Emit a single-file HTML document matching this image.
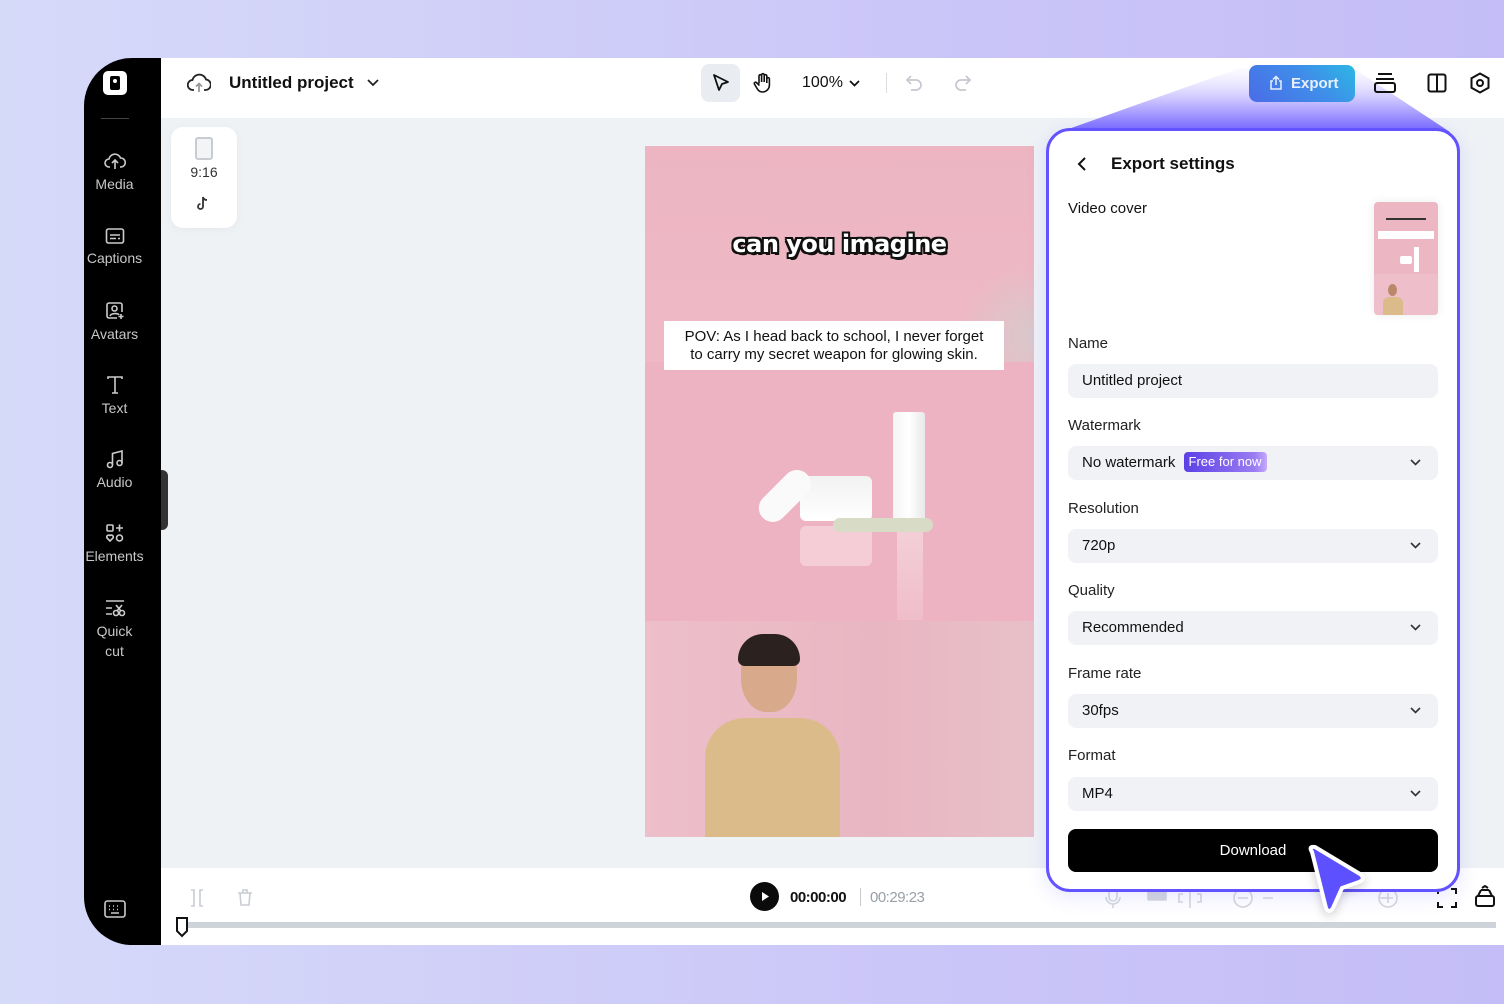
<!DOCTYPE html>
<html><head><meta charset="utf-8"><style>
*{box-sizing:border-box;margin:0;padding:0}
body{width:1504px;height:1004px;overflow:hidden;font-family:"Liberation Sans",sans-serif;background:linear-gradient(90deg,#d6daf9,#cbc6f8 60%,#c4bdf7);position:relative}
.abs{position:absolute}
.app{left:84px;top:58px;width:1420px;height:887px;border-radius:48px 0 0 48px;overflow:hidden;background:#eff2f5}
.side{left:0;top:0;width:77px;height:887px;background:#000}
.top{left:77px;top:0;right:0;height:60px;background:#fff}
.bot{left:77px;top:810px;right:0;height:77px;background:#fff}
.si{position:absolute;left:76px;width:77px;text-align:center;color:#c8c8c8;font-size:14px;line-height:20px}
.si svg{display:block;margin:0 auto 3px}
.lbl{position:absolute;left:1068px;font-size:15px;color:#222}
.fld{position:absolute;left:1068px;width:370px;height:34px;background:#f0f2f5;border-radius:8px;font-size:15px;color:#111;padding-left:14px;line-height:34px}
.fld .ch{position:absolute;right:16px;top:12px}
</style></head><body>
<div class="abs app">
 <div class="abs side">
  <div class="abs" style="left:19px;top:13px;width:24px;height:24px;background:#fff;border-radius:5px"><div style="position:absolute;left:7px;top:5px;width:10px;height:14px;background:#000;border-radius:2px"></div><div style="position:absolute;left:10px;top:8px;width:4px;height:4px;background:#fff;border-radius:2px"></div></div>
  <div class="abs" style="left:17px;top:60px;width:28px;height:1px;background:#444"></div>
  <div class="abs" style="left:77px;top:412px;width:7px;height:60px;background:#333;border-radius:0 6px 6px 0"></div>
 </div>
 <div class="abs top"></div>
 <div class="abs bot"></div>
</div>
<div class="si" style="top:151px"><svg width="22" height="20" viewBox="0 0 22 20" fill="none" stroke="#ccc" stroke-width="1.6"><path d="M6 16H5a4 4 0 0 1 0-8 6 6 0 0 1 11.5-1A4.5 4.5 0 0 1 17 16h-1"/><path d="M11 18v-8M8 12l3-3 3 3"/></svg>Media</div>
<div class="si" style="top:227px"><svg width="20" height="18" viewBox="0 0 20 18" fill="none" stroke="#ccc" stroke-width="1.6"><rect x="1.5" y="2" width="17" height="14" rx="2"/><path d="M5 8h10M5 11.5h6M13 11.5h2"/></svg>Captions</div>
<div class="si" style="top:301px"><svg width="20" height="20" viewBox="0 0 20 20" fill="none" stroke="#ccc" stroke-width="1.6"><path d="M12 17H4a2 2 0 0 1-2-2V4a2 2 0 0 1 2-2h11a2 2 0 0 1 2 2v7"/><circle cx="9.5" cy="7.5" r="2.5"/><path d="M5 15c1-3 8-3 9-1"/><path d="M16 13v5M13.5 15.5h5"/></svg>Avatars</div>
<div class="si" style="top:375px"><svg width="20" height="20" viewBox="0 0 20 20" fill="none" stroke="#ccc" stroke-width="1.6"><path d="M3 4V2h14v2M10 2v16M7 18h6"/></svg>Text</div>
<div class="si" style="top:449px"><svg width="20" height="20" viewBox="0 0 20 20" fill="none" stroke="#ccc" stroke-width="1.6"><circle cx="5" cy="16" r="2.5"/><circle cx="14.5" cy="14" r="2.5"/><path d="M7.5 16V4.5L17 2v12"/></svg>Audio</div>
<div class="si" style="top:523px"><svg width="20" height="20" viewBox="0 0 20 20" fill="none" stroke="#ccc" stroke-width="1.6"><rect x="2" y="2" width="6" height="6" rx="1"/><path d="M14.5 1.5v7M11 5h7"/><path d="M5 18l-3-3a2 2 0 0 1 3-2.5 2 2 0 0 1 3 2.5z"/><circle cx="14.5" cy="15" r="3"/></svg>Elements</div>
<div class="si" style="top:598px"><svg width="22" height="20" viewBox="0 0 22 20" fill="none" stroke="#ccc" stroke-width="1.6"><path d="M2 3h18M2 10h6M2 16h6"/><circle cx="12" cy="15" r="2.5"/><circle cx="18" cy="15" r="2.5"/><path d="M13 13l5-6M17 13l-5-6"/></svg>Quick<br>cut</div>
<svg class="abs" style="left:104px;top:900px" width="22" height="18" viewBox="0 0 22 18" fill="none" stroke="#ccc" stroke-width="1.6"><rect x="1" y="1" width="20" height="16" rx="2.5"/><path d="M5 6h1M9 6h1M13 6h1M17 6h0M5 9.5h1M9 9.5h1M13 9.5h1M7 13h8"/></svg>

<svg class="abs" style="left:187px;top:72px" width="24" height="22" viewBox="0 0 24 22" fill="none" stroke="#222" stroke-width="1.8"><path d="M7 18H6a5 5 0 0 1-.5-10A7 7 0 0 1 19 7.5 5 5 0 0 1 18 18h-1"/><path d="M12 20v-8M9 14.5l3-3 3 3" stroke="#999"/></svg>
<div class="abs" style="left:229px;top:73px;font-size:17px;font-weight:bold;color:#111">Untitled project</div>
<svg class="abs" style="left:366px;top:78px" width="14" height="10" viewBox="0 0 14 10" fill="none" stroke="#222" stroke-width="1.8"><path d="M2 2l5 5 5-5"/></svg>
<div class="abs" style="left:701px;top:64px;width:39px;height:38px;background:#e9ecf0;border-radius:8px"></div>
<svg class="abs" style="left:711px;top:73px" width="20" height="20" viewBox="0 0 20 20" fill="none" stroke="#111" stroke-width="1.8" stroke-linejoin="round"><path d="M3 2l14 7-6 2-3 6z"/></svg>
<svg class="abs" style="left:752px;top:72px" width="22" height="22" viewBox="0 0 22 22" fill="none" stroke="#111" stroke-width="1.6" stroke-linecap="round"><path d="M7 11V4a1.3 1.3 0 0 1 2.6 0v6V3a1.3 1.3 0 0 1 2.6 0v7V4a1.3 1.3 0 0 1 2.6 0v7V7a1.3 1.3 0 0 1 2.6 0v6a7 7 0 0 1-7 7 6 6 0 0 1-5-3l-3-5a1.3 1.3 0 0 1 2-1.5L7 13"/></svg>
<div class="abs" style="left:802px;top:74px;font-size:16px;color:#111">100%</div>
<svg class="abs" style="left:848px;top:79px" width="13" height="9" viewBox="0 0 13 9" fill="none" stroke="#111" stroke-width="1.8"><path d="M2 2l4.5 4.5L11 2"/></svg>
<div class="abs" style="left:886px;top:73px;width:1px;height:20px;background:#ddd"></div>
<svg class="abs" style="left:905px;top:74px" width="20" height="18" viewBox="0 0 20 18" fill="none" stroke="#c5c9cf" stroke-width="1.7"><path d="M6 2L2 6l4 4M2 6h9a5 5 0 0 1 0 10H6"/></svg>
<svg class="abs" style="left:952px;top:74px" width="20" height="18" viewBox="0 0 20 18" fill="none" stroke="#c5c9cf" stroke-width="1.7"><path d="M14 2l4 4-4 4M18 6H9a5 5 0 0 0 0 10h5"/></svg>

<svg class="abs" style="left:1046px;top:60px" width="420" height="80" viewBox="0 0 420 80"><defs><linearGradient id="bm" x1="0" y1="0" x2="0" y2="1"><stop offset="0" stop-color="#f4f2ff" stop-opacity=".3"/><stop offset=".6" stop-color="#b9b0ff"/><stop offset="1" stop-color="#7466ff"/></linearGradient></defs><path d="M194 8L307 8L404 72L14 72Z" fill="url(#bm)"/></svg>
<div class="abs" style="left:1249px;top:65px;width:106px;height:37px;border-radius:8px;background:linear-gradient(45deg,#4a6ce8,#3f8fe9 60%,#2cb8e4);color:#e8f0ff;font-size:15px;font-weight:bold;line-height:37px;padding-left:42px">Export</div>
<svg class="abs" style="left:1268px;top:75px" width="16" height="16" viewBox="0 0 16 16" fill="none" stroke="#e8f0ff" stroke-width="1.5"><path d="M5 6H3v8h10V6h-2M8 10V1.5M5 4.5l3-3 3 3"/></svg>
<svg class="abs" style="left:1373px;top:72px" width="24" height="22" viewBox="0 0 24 22" fill="none" stroke="#111" stroke-width="2"><path d="M5 2h14M3 7h18"/><rect x="2" y="11" width="20" height="9" rx="2"/></svg>
<svg class="abs" style="left:1427px;top:73px" width="20" height="20" viewBox="0 0 20 20" fill="none" stroke="#111" stroke-width="2"><rect x="1.5" y="1.5" width="17" height="17" rx="2"/><path d="M10 2v16"/></svg>
<svg class="abs" style="left:1469px;top:72px" width="22" height="22" viewBox="0 0 22 22" fill="none" stroke="#111" stroke-width="2"><path d="M11 1.5l8.5 4.75v9.5L11 20.5l-8.5-4.75v-9.5z"/><circle cx="11" cy="11" r="3"/></svg>

<div class="abs" style="left:171px;top:127px;width:66px;height:101px;background:#fff;border-radius:12px;box-shadow:0 2px 10px rgba(0,0,0,.04)"></div>
<div class="abs" style="left:195px;top:137px;width:18px;height:23px;border:2px solid #c7ccd3;border-radius:3px;background:#f2f4f6"></div>
<div class="abs" style="left:171px;top:164px;width:66px;text-align:center;font-size:14px;color:#333">9:16</div>
<svg class="abs" style="left:196px;top:196px" width="14" height="16" viewBox="0 0 14 16"><path d="M7 1v9.5a2.5 2.5 0 1 1-2.5-2.5M7 1c.5 2 2 3 4 3" fill="none" stroke="#333" stroke-width="1.8"/></svg>

<div class="abs" style="left:645px;top:146px;width:389px;height:691px;overflow:hidden;background:#ecb7c3">
 <div class="abs" style="left:0;top:0;width:389px;height:216px;background:linear-gradient(180deg,#ecb5c1,#eeb9c5)"></div>
 <div class="abs" style="left:300px;top:120px;width:120px;height:140px;background:radial-gradient(circle at 70% 50%,#d9c8cc,transparent 65%)"></div>
 <div class="abs" style="left:0;top:216px;width:389px;height:259px;background:#eeb3c2"></div>
 <div class="abs" style="left:0;top:475px;width:389px;height:216px;background:linear-gradient(90deg,#edbfca,#e8b6c2 60%,#e8c0c8)"></div>
 <div class="abs" style="left:248px;top:266px;width:32px;height:120px;background:linear-gradient(90deg,#f4f4f4,#fff,#e8e8e8);border-radius:3px"></div>
 <div class="abs" style="left:252px;top:384px;width:26px;height:90px;background:linear-gradient(180deg,#f5d6dd,#f0c0cc);opacity:.8"></div>
 <div class="abs" style="left:155px;top:330px;width:72px;height:45px;background:linear-gradient(180deg,#f2f2f2,#fff);border-radius:6px"></div>
 <div class="abs" style="left:155px;top:380px;width:72px;height:40px;background:#f5d3db;border-radius:6px;opacity:.8"></div>
 <div class="abs" style="left:108px;width:62px;height:28px;background:#fafafa;border-radius:14px;transform:rotate(-45deg);transform-origin:left top;top:362px"></div>
 <div class="abs" style="left:188px;top:372px;width:100px;height:14px;background:#d8dcc6;border-radius:8px"></div>
 <div class="abs" style="left:96px;top:492px;width:56px;height:74px;background:#d8a98a;border-radius:45%"></div>
 <div class="abs" style="left:93px;top:488px;width:62px;height:32px;background:#2b2220;border-radius:30px 30px 8px 8px"></div>
 <div class="abs" style="left:60px;top:572px;width:135px;height:125px;background:#dcbb8a;border-radius:40px 40px 0 0"></div>
 <div style="position:absolute;left:0;top:84px;width:389px;text-align:center;font-family:'DejaVu Sans',sans-serif;font-weight:bold;font-size:24px;color:#fff;letter-spacing:-0.5px;text-shadow:2px 0 #111,-2px 0 #111,0 2px #111,0 -2px #111,2px 2px #111,-2px 2px #111,2px -2px #111,-2px -2px #111,2px 3px #111">can you imagine</div>
 <div class="abs" style="left:19px;top:175px;width:340px;height:49px;background:#fff;text-align:center;font-size:15px;color:#111;line-height:18px;padding-top:7px">POV: As I head back to school, I never forget<br>to carry my secret weapon for glowing skin.</div>
</div>

<svg class="abs" style="left:189px;top:888px" width="16" height="20" viewBox="0 0 16 20" fill="none" stroke="#c8cdd3" stroke-width="1.6"><path d="M2 2h3v16H2M14 2h-3v16h3"/></svg>
<svg class="abs" style="left:236px;top:887px" width="18" height="20" viewBox="0 0 18 20" fill="none" stroke="#c8cdd3" stroke-width="1.6"><path d="M2 6h14M4 6l1 12h8l1-12M7 6V3h4v3"/></svg>
<div class="abs" style="left:750px;top:882px;width:29px;height:29px;border-radius:50%;background:#0b0b0b"></div>
<svg class="abs" style="left:760px;top:891px" width="10" height="11" viewBox="0 0 10 11"><path d="M2 1l7 4.5L2 10z" fill="#fff"/></svg>
<div class="abs" style="left:790px;top:889px;font-size:15px;font-weight:bold;color:#111;letter-spacing:-0.5px">00:00:00</div>
<div class="abs" style="left:860px;top:888px;width:1px;height:18px;background:#ccc"></div>
<div class="abs" style="left:870px;top:889px;font-size:15px;color:#9aa0a8;letter-spacing:-0.5px">00:29:23</div>
<div class="abs" style="left:176px;top:922px;width:1320px;height:6px;background:#cfd4db"></div>
<svg class="abs" style="left:174px;top:915px" width="16" height="24" viewBox="0 0 16 24"><path d="M3 3h10v13l-5 5-5-5z" fill="#fff" stroke="#111" stroke-width="2"/></svg>
<svg class="abs" style="left:1103px;top:886px" width="300" height="24" viewBox="0 0 300 24" fill="none" stroke="#d4d8dd" stroke-width="1.6"><rect x="6" y="3" width="8" height="12" rx="4"/><path d="M3 11a7 7 0 0 0 14 0M10 18v4"/><rect x="45" y="4" width="18" height="10" rx="1" fill="#d4d8dd"/><path d="M87 4v18M80 8h-4v8h4M94 8h4v8h-4"/><circle cx="140" cy="12" r="9"/><path d="M135 12h10M160 12h10M276 12h10"/><circle cx="285" cy="12" r="9"/><path d="M285 7v10M280 12h10"/></svg>
<svg class="abs" style="left:1436px;top:887px" width="22" height="22" viewBox="0 0 22 22" fill="none" stroke="#111" stroke-width="2"><path d="M2 7V2h5M15 2h5v5M20 15v5h-5M7 20H2v-5"/></svg>
<svg class="abs" style="left:1474px;top:885px" width="22" height="24" viewBox="0 0 22 24" fill="none" stroke="#111" stroke-width="2"><rect x="2" y="11" width="18" height="10" rx="2"/><path d="M4 11l3-6M18 11l-3-6M7 5h8M8 3l3-2 3 2"/></svg>

<div class="abs" style="left:1046px;top:128px;width:414px;height:764px;border:3px solid #6353ff;border-radius:24px;background:#fff;box-shadow:0 4px 20px rgba(90,80,255,.15)"></div>
<svg class="abs" style="left:1076px;top:156px" width="12" height="16" viewBox="0 0 12 16" fill="none" stroke="#111" stroke-width="2"><path d="M9 2L3 8l6 6"/></svg>
<div class="abs" style="left:1111px;top:154px;font-size:17px;font-weight:bold;color:#111">Export settings</div>
<div class="abs" style="left:1068px;top:200px;font-size:15px;color:#111">Video cover</div>
<div class="abs" style="left:1374px;top:202px;width:64px;height:113px;border-radius:4px;overflow:hidden;background:#ecb7c3;box-shadow:0 0 10px rgba(0,0,0,.08)">
 <div class="abs" style="left:0;top:72px;width:64px;height:41px;background:#eebfca"></div>
 <div class="abs" style="left:12px;top:16px;width:40px;height:2px;background:#333"></div>
 <div class="abs" style="left:4px;top:29px;width:56px;height:8px;background:#fff"></div>
 <div class="abs" style="left:40px;top:45px;width:5px;height:25px;background:#fff"></div>
 <div class="abs" style="left:26px;top:54px;width:12px;height:8px;background:#fff;border-radius:2px"></div>
 <div class="abs" style="left:14px;top:82px;width:9px;height:12px;background:#b98868;border-radius:50%"></div>
 <div class="abs" style="left:9px;top:95px;width:20px;height:18px;background:#dcbb8a;border-radius:6px 6px 0 0"></div>
</div>
<div class="lbl" style="top:335px">Name</div>
<div class="fld" style="top:364px">Untitled project</div>
<div class="lbl" style="top:417px">Watermark</div>
<div class="fld" style="top:446px">No watermark <span style="display:inline-block;margin-left:4px;background:linear-gradient(90deg,#5b40e6,#9a7cf2 85%,#c7a9fb);color:#fff;font-size:13px;line-height:20px;padding:0 5px;border-radius:4px;vertical-align:1px">Free for now</span><svg class="ch" width="13" height="9" viewBox="0 0 13 9" fill="none" stroke="#333" stroke-width="1.6"><path d="M2 2l4.5 4.5L11 2"/></svg></div>
<div class="lbl" style="top:500px">Resolution</div>
<div class="fld" style="top:529px">720p<svg class="ch" width="13" height="9" viewBox="0 0 13 9" fill="none" stroke="#333" stroke-width="1.6"><path d="M2 2l4.5 4.5L11 2"/></svg></div>
<div class="lbl" style="top:582px">Quality</div>
<div class="fld" style="top:611px">Recommended<svg class="ch" width="13" height="9" viewBox="0 0 13 9" fill="none" stroke="#333" stroke-width="1.6"><path d="M2 2l4.5 4.5L11 2"/></svg></div>
<div class="lbl" style="top:665px">Frame rate</div>
<div class="fld" style="top:694px">30fps<svg class="ch" width="13" height="9" viewBox="0 0 13 9" fill="none" stroke="#333" stroke-width="1.6"><path d="M2 2l4.5 4.5L11 2"/></svg></div>
<div class="lbl" style="top:747px">Format</div>
<div class="fld" style="top:777px">MP4<svg class="ch" width="13" height="9" viewBox="0 0 13 9" fill="none" stroke="#333" stroke-width="1.6"><path d="M2 2l4.5 4.5L11 2"/></svg></div>
<div class="abs" style="left:1068px;top:829px;width:370px;height:43px;background:#000;border-radius:8px;color:#fff;font-size:15px;text-align:center;line-height:43px">Download</div>
<svg class="abs" style="left:1300px;top:838px;filter:drop-shadow(0 3px 5px rgba(0,0,0,.2))" width="76" height="80" viewBox="0 0 76 80"><path d="M12 14Q8 8 15 9L60 36Q66 41 59 44L42 50 33 70Q29 76 26 70Z" fill="#5c50ff" stroke="#fff" stroke-width="4" stroke-linejoin="round"/></svg>
</body></html>
